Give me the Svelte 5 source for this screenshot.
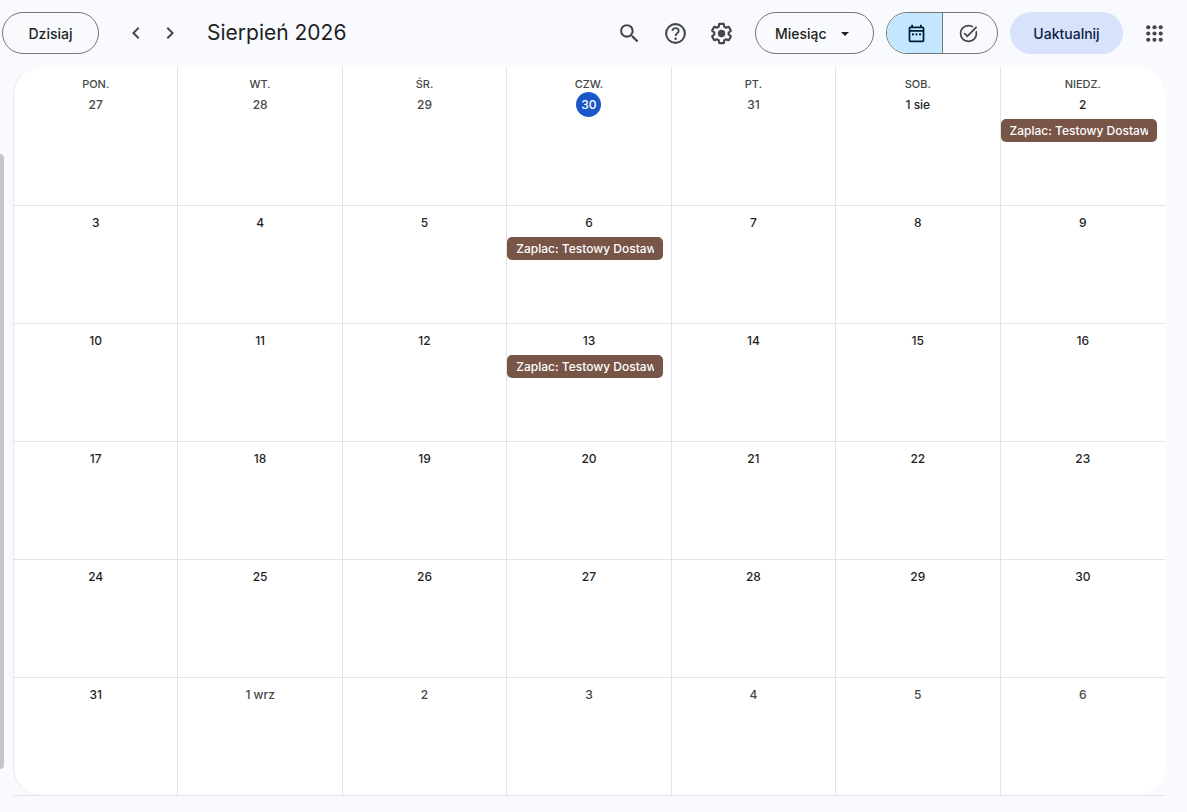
<script>
	const weekdays = ['pon.', 'wt.', 'śr.', 'czw.', 'pt.', 'sob.', 'niedz.'];
	const months = ['lip', 'sie', 'wrz'];
	const first = new Date(2026, 6, 27);
	const today = '7-30';

	/** @type { Record<string, string> } */
	const events = {
		'8-2': 'Zaplac: Testowy Dostawca',
		'8-6': 'Zaplac: Testowy Dostawca',
		'8-13': 'Zaplac: Testowy Dostawca'
	};

	const weeks = Array.from({ length: 6 }, (_, w) =>
		Array.from({ length: 7 }, (_, d) => {
			const date = new Date(first.getFullYear(), first.getMonth(), first.getDate() + w * 7 + d);
			const day = date.getDate();
			const month = date.getMonth() + 1;
			return {
				key: `${month}-${day}`,
				label: day === 1 ? `1 ${months[month - 7]}` : `${day}`,
				outside: month !== 8
			};
		})
	);

	let mode = $state('calendar');
	let view = $state('Miesiąc');
</script>

<div class="app">
	<header>
		<button class="pill today-btn">Dzisiaj</button>
		<div class="arrows">
			<button class="icon" aria-label="Poprzedni miesiąc">
				<svg width="24" height="24" viewBox="0 0 24 24"><path d="M15.41 7.41 14 6l-6 6 6 6 1.41-1.41L10.83 12z" /></svg>
			</button>
			<button class="icon" aria-label="Następny miesiąc">
				<svg width="24" height="24" viewBox="0 0 24 24"><path d="M10 6 8.59 7.41 13.17 12l-4.58 4.59L10 18l6-6z" /></svg>
			</button>
		</div>
		<h1>Sierpień 2026</h1>

		<div class="tools">
			<button class="icon" aria-label="Szukaj">
				<svg width="25" height="25" viewBox="0 0 24 24">
					<path d="M15.5 14h-.79l-.28-.27A6.471 6.471 0 0 0 16 9.5 6.5 6.5 0 1 0 9.5 16c1.61 0 3.09-.59 4.23-1.57l.27.28v.79l5 4.99L20.49 19l-4.99-5zm-6 0C7.01 14 5 11.99 5 9.5S7.01 5 9.5 5 14 7.01 14 9.5 11.99 14 9.5 14z" />
				</svg>
			</button>
			<button class="icon" aria-label="Pomoc">
				<svg width="25" height="25" viewBox="0 0 24 24">
					<circle class="line" cx="12" cy="12" r="9" stroke-width="2" />
					<path class="line" stroke-width="1.7" d="M8.9 9.4c.3-1.6 1.5-2.6 3.1-2.6 1.8 0 3.1 1.1 3.1 2.7 0 2.2-3 2.4-3 5" />
					<circle cx="12.1" cy="17" r="1.2" />
				</svg>
			</button>
			<button class="icon" aria-label="Ustawienia">
				<svg width="25" height="25" viewBox="0 0 24 24">
					<path d="M13.85 22.25h-3.7c-.74 0-1.36-.54-1.45-1.27l-.27-1.89c-.27-.14-.53-.29-.79-.46l-1.8.72c-.7.26-1.47-.03-1.81-.65L2.2 15.53c-.35-.66-.2-1.44.36-1.88l1.53-1.19c-.01-.15-.02-.3-.02-.46 0-.15.01-.31.02-.46l-1.52-1.19c-.59-.45-.74-1.26-.37-1.88l1.85-3.19c.34-.62 1.11-.9 1.79-.63l1.81.73c.26-.17.52-.32.78-.46l.27-1.91c.09-.7.71-1.25 1.44-1.25h3.7c.74 0 1.36.54 1.45 1.27l.27 1.89c.27.14.53.29.79.46l1.8-.72c.71-.26 1.48.03 1.82.65l1.84 3.18c.36.66.2 1.44-.36 1.88l-1.52 1.19c.01.15.02.3.02.46s-.01.31-.02.46l1.52 1.19c.56.45.72 1.23.37 1.86l-1.86 3.22c-.34.62-1.11.9-1.8.63l-1.8-.72c-.26.17-.52.32-.78.46l-.27 1.91c-.1.68-.72 1.22-1.46 1.22zm-3.23-2h2.76l.37-2.55.53-.22c.44-.18.88-.44 1.34-.78l.45-.34 2.38.96 1.38-2.4-2.03-1.58.07-.56c.03-.26.06-.51.06-.78s-.03-.53-.06-.78l-.07-.56 2.03-1.58-1.39-2.4-2.39.96-.45-.35c-.42-.32-.87-.58-1.33-.77l-.52-.22-.37-2.55h-2.76l-.37 2.55-.53.21c-.44.19-.88.44-1.34.79l-.45.33-2.38-.95-1.39 2.39 2.03 1.58-.07.56a7 7 0 0 0-.06.79c0 .26.02.53.06.78l.07.56-2.03 1.58 1.38 2.4 2.39-.96.45.35c.43.33.86.58 1.33.77l.53.22z" />
					<circle cx="12" cy="12" r="3.5" />
				</svg>
			</button>
		</div>

		<div class="select">
			<select class="pill" aria-label="Widok" bind:value={view}>
				<option>Dzień</option>
				<option>Tydzień</option>
				<option>Miesiąc</option>
				<option>Rok</option>
			</select>
			<svg class="caret" width="8" height="4" viewBox="0 0 8 4"><path d="M0 0h8L4 4z" /></svg>
		</div>

		<div class="switch">
			<button
				class:active={mode === 'calendar'}
				aria-pressed={mode === 'calendar'}
				aria-label="Kalendarz"
				onclick={() => (mode = 'calendar')}
			>
				<svg width="21" height="21" viewBox="0 0 24 24">
					<path d="M19 4h-1V2h-2v2H8V2H6v2H5c-1.11 0-1.99.9-1.99 2L3 20a2 2 0 0 0 2 2h14c1.1 0 2-.9 2-2V6c0-1.1-.9-2-2-2zm0 16H5V10h14v10zm0-12H5V6h14v2z" />
					{#each [8, 12, 16] as cx}
						<circle {cx} cy="13" r="1.2" />
					{/each}
				</svg>
			</button>
			<button
				class:active={mode === 'tasks'}
				aria-pressed={mode === 'tasks'}
				aria-label="Lista zadań"
				onclick={() => (mode = 'tasks')}
			>
				<svg width="21" height="21" viewBox="0 0 24 24">
					<path d="M22 5.18 10.59 16.6l-4.24-4.24 1.41-1.41 2.83 2.83 10-10L22 5.18zM19.79 10.22c.13.57.21 1.17.21 1.78 0 4.42-3.58 8-8 8s-8-3.58-8-8 3.58-8 8-8c1.58 0 3.04.46 4.28 1.25l1.44-1.44A9.9 9.9 0 0 0 12 2C6.48 2 2 6.48 2 12s4.48 10 10 10 10-4.48 10-10c0-1.19-.22-2.33-.6-3.39l-1.61 1.61z" />
				</svg>
			</button>
		</div>

		<button class="upgrade">Uaktualnij</button>

		<button class="icon" aria-label="Aplikacje Google">
			<svg width="25" height="25" viewBox="0 0 24 24">
				{#each [6, 12, 18] as cy}
					{#each [6, 12, 18] as cx}
						<circle {cx} {cy} r="2" />
					{/each}
				{/each}
			</svg>
		</button>
	</header>

	<div class="content">
		<div class="rail"><div class="thumb"></div></div>
		<main>
			<div class="sheet">
				<table>
					<thead>
						<tr>
							{#each weekdays as name}
								<th scope="col">{name}</th>
							{/each}
						</tr>
					</thead>
					<tbody>
						{#each weeks as week}
							<tr>
								{#each week as day (day.key)}
									<td>
										<div class="day" class:outside={day.outside} class:today={day.key === today}>
											{day.label}
										</div>
										{#if events[day.key]}
											<button class="event"><span>{events[day.key]}</span></button>
										{/if}
									</td>
								{/each}
							</tr>
						{/each}
					</tbody>
				</table>
			</div>
		</main>
	</div>
</div>

<style>
	:global(body) {
		margin: 0;
		background: #f8fafd;
	}

	.app {
		min-height: 100vh;
		color: #1f1f1f;
		font-family: Inter, Roboto, sans-serif;
	}

	button,
	select {
		box-sizing: border-box;
		margin: 0;
		padding: 0;
		border: none;
		background: none;
		color: inherit;
		font: inherit;
		cursor: pointer;
	}

	svg {
		display: block;
		fill: currentColor;
	}

	.line {
		fill: none;
		stroke: currentColor;
	}

	header {
		display: flex;
		align-items: center;
		height: 67px;
		box-sizing: border-box;
		padding: 0 20px 1px 2px;
	}

	.pill {
		height: 42px;
		border: 1px solid #747775;
		border-radius: 21px;
		font-size: 14px;
		font-weight: 500;
	}

	.today-btn {
		width: 97px;
	}

	.arrows {
		display: flex;
		gap: 10px;
		margin-left: 25px;
	}

	.icon {
		color: #444746;
	}

	h1 {
		margin: 0 auto 0 25px;
		font-size: 21px;
		font-weight: 400;
		line-height: 28px;
	}

	.tools {
		display: flex;
		gap: 21px;
		margin-right: 21px;
	}

	.select {
		position: relative;

		> select {
			width: 119px;
			padding: 0 38px 0 19px;
			appearance: none;
		}

		> .caret {
			position: absolute;
			top: 20px;
			right: 25px;
			pointer-events: none;
		}
	}

	.switch {
		display: flex;
		height: 42px;
		box-sizing: border-box;
		margin: 0 12px;
		border: 1px solid #747775;
		border-radius: 21px;
		overflow: hidden;

		> button {
			display: flex;
			justify-content: center;
			align-items: center;
			width: 54px;
			padding-right: 4px;
			color: #444746;
		}

		> button:first-child {
			width: 56px;
			padding: 0 0 0 4px;
			border-right: 1px solid #747775;
		}

		> .active {
			background: #c2e7ff;
			color: #001d35;
		}
	}

	.upgrade {
		width: 113px;
		height: 42px;
		margin-right: 19px;
		border-radius: 21px;
		background: #d8e3fb;
		color: #0b1f4b;
		font-size: 14px;
		font-weight: 500;
	}

	.content {
		display: flex;
		padding-right: 22px;
	}

	.rail {
		display: flex;
		flex: none;
		width: 13px;
		padding: 87px 0 27px;
		box-sizing: border-box;

		> .thumb {
			width: 4px;
			border-radius: 0 4px 4px 0;
			background: #c6c6c6;
		}
	}

	main {
		flex: 1;
		min-width: 0;
		border-bottom: 1px solid #e1e3e6;
	}

	.sheet {
		box-sizing: border-box;
		border-left: 1px solid #e6e8eb;
		border-radius: 28px;
		background: #fff;
		overflow: hidden;
	}

	table {
		width: 100%;
		table-layout: fixed;
		border-spacing: 0;
	}

	th {
		padding: 13px 0 0;
		color: #444746;
		font-size: 11px;
		font-weight: 500;
		line-height: 8px;
		text-transform: uppercase;
	}

	td {
		box-sizing: border-box;
		height: 118px;
		padding: 4px 0 0;
		border-bottom: 1px solid #e1e3e6;
		vertical-align: top;
	}

	tr:last-child > td {
		height: 117px;
		border-bottom: none;
	}

	th:not(:last-child),
	td:not(:last-child) {
		border-right: 1px solid #e1e3e6;
	}

	.day {
		width: fit-content;
		min-width: 25px;
		margin: 0 auto;
		font-size: 12px;
		font-weight: 500;
		line-height: 25px;
		text-align: center;
	}

	.outside {
		color: #444746;
	}

	.today {
		border-radius: 50%;
		background: #1b57c9;
		color: #fff;
	}

	.event {
		display: block;
		width: calc(100% - 8px);
		height: 23px;
		margin-top: 2px;
		padding: 0 9px;
		border-radius: 5px;
		background: #795548;
		color: #fff;
		font-size: 12px;
		font-weight: 500;
		text-align: left;

		> span {
			display: block;
			overflow: hidden;
			white-space: nowrap;
		}
	}
</style>
